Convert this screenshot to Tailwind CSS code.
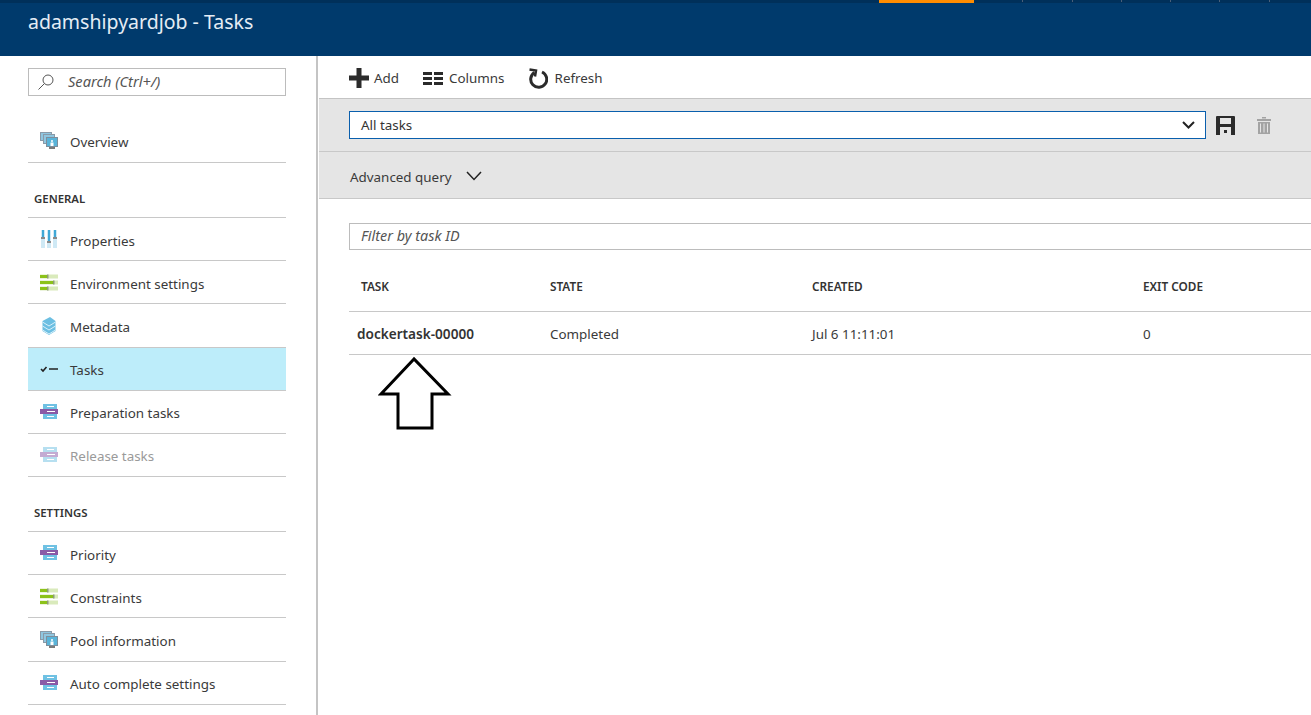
<!DOCTYPE html>
<html lang="en">
<head>
    <meta charset="UTF-8">
    <title>adamshipyardjob - Tasks</title>
    <script src="https://cdn.jsdelivr.net/npm/@tailwindcss/browser@4"></script>
</head>
<body class="relative h-[715px] w-[1311px] overflow-hidden bg-white font-['Noto_Sans','Open_Sans',sans-serif] text-[13.4px] text-[#3a3a3a]">
    <!-- Header -->
    <header class="h-[56px] bg-[#003a6c]">
        <div class="flex h-[3px] bg-[#00305a]">
            <div class="ml-[879px] h-[3px] w-[95px] bg-[#ff8c00]"></div>
            <div class="ml-[48px] h-[2px] w-px bg-[#4a5f78]"></div>
            <div class="ml-[49px] h-[2px] w-px bg-[#4a5f78]"></div>
            <div class="ml-[48px] h-[2px] w-px bg-[#4a5f78]"></div>
            <div class="ml-[48px] h-[2px] w-px bg-[#4a5f78]"></div>
            <div class="ml-[48px] h-[2px] w-px bg-[#4a5f78]"></div>
            <div class="ml-[49px] h-[2px] w-px bg-[#4a5f78]"></div>
        </div>
        <h1 class="mt-[6px] pl-[28px] text-[19.5px] leading-[26px] text-[#e4edf5]">adamshipyardjob - Tasks</h1>
    </header>

    <div class="flex h-[659px]">
        <!-- Sidebar -->
        <aside class="h-full w-[318px] shrink-0 border-r-2 border-[#c4c4c4] pl-[28px] pr-[30px] pt-[12px]">
            <div class="flex h-[28px] w-[258px] items-center border border-[#bcbcbc] pl-[8px]">
                <svg class="h-[18px] w-[18px] text-[#555]" viewBox="0 0 18 18" fill="none" stroke="currentColor" stroke-width="1"><circle cx="11" cy="7" r="5"/><path d="M7.500 10.500 1.500 16.500"/></svg>
                <span class="ml-[13px] text-[14.6px] italic text-[#555]">Search (Ctrl+/)</span>
            </div>

            <div class="mt-[24px]">
                <div class="flex h-[43px] items-center border-b border-[#c8c8c8] pl-[12px]">
                    <svg class="mr-[12px] h-[18px] w-[18px]" viewBox="0 0 18 18"><rect x="0.500" y="0.500" width="11" height="8" fill="#8fc6e0" stroke="#8a9aa8"/><rect x="3.500" y="2.500" width="11" height="9" fill="#8fc6e0" stroke="#8a9aa8"/><rect x="6.500" y="5.500" width="11" height="9" fill="#59b4d9" stroke="#7d8e9c"/><path d="M12 8a1 1 0 1 1 0 2 1 1 0 0 1 0-2ZM10.500 10.500h3V14h-3Z" fill="#fff"/><rect x="9" y="15" width="6" height="2" fill="#7a7a7a"/></svg>
                    <span class="mt-[3px]">Overview</span>
                </div>
            </div>

            <div class="h-[54px] pt-[27px] pl-[6px] text-[11.4px] font-semibold leading-[18px] text-[#333]">GENERAL</div>
            <div class="border-t border-[#c8c8c8]">
                <div class="flex h-[43px] items-center border-b border-[#c8c8c8] pl-[12px]">
                    <svg class="mr-[12px] h-[18px] w-[18px]" viewBox="0 0 18 18"><rect x="1" y="0" width="4" height="18" fill="#cfe9f5"/><rect x="7" y="0" width="4" height="18" fill="#cfe9f5"/><rect x="13" y="0" width="4" height="18" fill="#cfe9f5"/><rect x="2" y="0" width="2" height="8" fill="#3fa8d6"/><rect x="8" y="0" width="2" height="12" fill="#3fa8d6"/><rect x="14" y="0" width="2" height="8" fill="#3fa8d6"/><rect x="1" y="7" width="4" height="2" fill="#8a8a8a"/><rect x="7" y="11" width="4" height="2" fill="#8a8a8a"/><rect x="13" y="7" width="4" height="2" fill="#8a8a8a"/></svg>
                    <span class="mt-[5px]">Properties</span>
                </div>
                <div class="flex h-[43px] items-center border-b border-[#c8c8c8] pl-[12px]">
                    <svg class="mr-[12px] h-[18px] w-[18px]" viewBox="0 0 18 18"><rect y="1.500" width="18" height="4" fill="#d9eabb"/><rect y="7.500" width="18" height="4" fill="#d9eabb"/><rect y="13.500" width="18" height="4" fill="#d9eabb"/><rect y="2" width="7" height="3" fill="#8cc21a"/><rect y="8" width="13" height="3" fill="#8cc21a"/><rect y="14" width="7" height="3" fill="#8cc21a"/><rect x="7" y="1.500" width="1.500" height="4" fill="#8d9a7c"/><rect x="13" y="7.500" width="1.500" height="4" fill="#8d9a7c"/><rect x="7" y="13.500" width="1.500" height="4" fill="#8d9a7c"/></svg>
                    <span class="mt-[5px]">Environment settings</span>
                </div>
                <div class="flex h-[44px] items-center border-b border-[#c8c8c8] pl-[12px]">
                    <svg class="mr-[12px] h-[18px] w-[18px]" viewBox="0 0 18 18"><path d="M10 0 15.500 4V14L9 18 2.500 14V4Z" fill="#6cbfe2"/><path d="M2.500 5 9 9 15.500 5M2.500 9 9 13 15.500 9M2.500 13 9 17 15.500 13" fill="none" stroke="#d8f0fa" stroke-width="1"/></svg>
                    <span class="mt-[3px]">Metadata</span>
                </div>
                <div class="flex h-[43px] items-center border-b border-[#c8c8c8] bg-[#bdedfa] pl-[12px]">
                    <svg class="mr-[12px] h-[18px] w-[18px]" viewBox="0 0 18 18" fill="none" stroke="#222"><path d="M1 9 3 11 6.500 7" stroke-width="1.600"/><path d="M9 9H18" stroke-width="1.500"/></svg>
                    <span class="mt-[3px]">Tasks</span>
                </div>
                <div class="flex h-[43px] items-center border-b border-[#c8c8c8] pl-[12px]">
                    <svg class="mr-[12px] h-[18px] w-[18px]" viewBox="0 0 18 18"><rect x="3" y="1" width="14" height="5" fill="#6fc1e3"/><rect x="3" y="11" width="14" height="5" fill="#6fc1e3"/><rect x="0" y="6" width="18" height="5" fill="#8a5aa6"/><path d="M7 3.500H14M7 13.500H14M7 8.500H15" stroke="#fff" stroke-width="1"/></svg>
                    <span class="mt-[3px]">Preparation tasks</span>
                </div>
                <div class="flex h-[43px] items-center border-b border-[#c8c8c8] pl-[12px] text-[#9a9a9a]">
                    <svg class="mr-[12px] h-[18px] w-[18px] opacity-50" viewBox="0 0 18 18"><rect x="3" y="1" width="14" height="5" fill="#6fc1e3"/><rect x="3" y="11" width="14" height="5" fill="#6fc1e3"/><rect x="0" y="6" width="18" height="5" fill="#8a5aa6"/><path d="M7 3.500H14M7 13.500H14M7 8.500H15" stroke="#fff" stroke-width="1"/></svg>
                    <span class="mt-[3px]">Release tasks</span>
                </div>
            </div>

            <div class="h-[54px] pt-[27px] pl-[6px] text-[11.4px] font-semibold leading-[18px] text-[#333]">SETTINGS</div>
            <div class="border-t border-[#c8c8c8]">
                <div class="flex h-[43px] items-center border-b border-[#c8c8c8] pl-[12px]">
                    <svg class="mr-[12px] h-[18px] w-[18px]" viewBox="0 0 18 18"><rect x="3" y="1" width="14" height="5" fill="#6fc1e3"/><rect x="3" y="11" width="14" height="5" fill="#6fc1e3"/><rect x="0" y="6" width="18" height="5" fill="#8a5aa6"/><path d="M7 3.500H14M7 13.500H14M7 8.500H15" stroke="#fff" stroke-width="1"/></svg>
                    <span class="mt-[5px]">Priority</span>
                </div>
                <div class="flex h-[43px] items-center border-b border-[#c8c8c8] pl-[12px]">
                    <svg class="mr-[12px] h-[18px] w-[18px]" viewBox="0 0 18 18"><rect y="1.500" width="18" height="4" fill="#d9eabb"/><rect y="7.500" width="18" height="4" fill="#d9eabb"/><rect y="13.500" width="18" height="4" fill="#d9eabb"/><rect y="2" width="7" height="3" fill="#8cc21a"/><rect y="8" width="13" height="3" fill="#8cc21a"/><rect y="14" width="7" height="3" fill="#8cc21a"/><rect x="7" y="1.500" width="1.500" height="4" fill="#8d9a7c"/><rect x="13" y="7.500" width="1.500" height="4" fill="#8d9a7c"/><rect x="7" y="13.500" width="1.500" height="4" fill="#8d9a7c"/></svg>
                    <span class="mt-[5px]">Constraints</span>
                </div>
                <div class="flex h-[44px] items-center border-b border-[#c8c8c8] pl-[12px]">
                    <svg class="mr-[12px] h-[18px] w-[18px]" viewBox="0 0 18 18"><rect x="0.500" y="0.500" width="11" height="8" fill="#8fc6e0" stroke="#8a9aa8"/><rect x="3.500" y="2.500" width="11" height="9" fill="#8fc6e0" stroke="#8a9aa8"/><rect x="6.500" y="5.500" width="11" height="9" fill="#59b4d9" stroke="#7d8e9c"/><path d="M12 8a1 1 0 1 1 0 2 1 1 0 0 1 0-2ZM10.500 10.500h3V14h-3Z" fill="#fff"/><rect x="9" y="15" width="6" height="2" fill="#7a7a7a"/></svg>
                    <span class="mt-[3px]">Pool information</span>
                </div>
                <div class="flex h-[43px] items-center border-b border-[#c8c8c8] pl-[12px]">
                    <svg class="mr-[12px] h-[18px] w-[18px]" viewBox="0 0 18 18"><rect x="3" y="1" width="14" height="5" fill="#6fc1e3"/><rect x="3" y="11" width="14" height="5" fill="#6fc1e3"/><rect x="0" y="6" width="18" height="5" fill="#8a5aa6"/><path d="M7 3.500H14M7 13.500H14M7 8.500H15" stroke="#fff" stroke-width="1"/></svg>
                    <span class="mt-[3px]">Auto complete settings</span>
                </div>
            </div>
        </aside>

        <!-- Main -->
        <main class="min-w-0 flex-1 pl-px">
            <div class="flex h-[43px] items-center border-b border-[#c4c4c4] pl-[30px] pt-[2px]">
                <svg class="h-[20px] w-[20px]" viewBox="0 0 20 20" fill="#2b2b2b"><path d="M7.500 0h5v7.500H20v5h-7.500V20h-5v-7.500H0v-5h7.500Z"/></svg>
                <span class="ml-[5px]">Add</span>
                <svg class="ml-[24px] h-[13px] w-[20px]" viewBox="0 0 20 13" fill="#2b2b2b"><path d="M0 0h9v3H0ZM11 0h9v3h-9ZM0 5h9v3H0ZM11 5h9v3h-9ZM0 10h9v3H0ZM11 10h9v3h-9Z"/></svg>
                <span class="ml-[6px]">Columns</span>
                <svg class="ml-[23px] h-[21px] w-[20px]" viewBox="0 0 20 21" fill="none" stroke="#2b2b2b" stroke-width="3"><path d="M6.500 4.500A8 8 0 1 0 14 4"/><path d="M1.500 1.500 8 2.500 7 8.500" stroke-width="2.500"/></svg>
                <span class="ml-[7px]">Refresh</span>
            </div>

            <div class="flex h-[53px] items-center border-b border-[#c8c8c8] bg-[#e5e5e5] pl-[30px]">
                <div class="flex h-[28px] w-[857px] items-center justify-between border border-[#0a5fad] bg-white pl-[11px] pr-[10px]">
                    <span class="text-[#333]">All tasks</span>
                    <svg class="h-[8px] w-[13px]" viewBox="0 0 13 8" fill="none" stroke="#222" stroke-width="2"><path d="M1 1 6.500 6.500 12 1"/></svg>
                </div>
                <svg class="ml-[10px] h-[19px] w-[19px]" viewBox="0 0 19 19" fill="#2b2b2b"><path d="M1 0H18a1 1 0 0 1 1 1V19H0V1a1 1 0 0 1 1-1ZM4 2V8H15V2ZM4 11V19H15V11Z" fill-rule="evenodd"/><rect x="8" y="14" width="3" height="3"/></svg>
                <svg class="ml-[22px] h-[17px] w-[14px]" viewBox="0 0 14 17" fill="#a3a3a3"><path d="M5 0h4v1.500H5ZM0 2h14v2H0ZM1 5h12v12H1Z"/><path d="M3.500 6.500V15.500M7 6.500V15.500M10.500 6.500V15.500" stroke="#e5e5e5"/></svg>
            </div>

            <div class="flex h-[47px] items-center border-b border-[#c8c8c8] bg-[#e5e5e5] pl-[31px] pt-[2px]">
                <span class="mt-[2px]">Advanced query</span>
                <svg class="ml-[14px] h-[10px] w-[16px]" viewBox="0 0 16 10" fill="none" stroke="#222" stroke-width="1.500"><path d="M1 1 8 8.500 15 1"/></svg>
            </div>

            <div class="ml-[30px] mt-[24px] flex h-[27px] items-center border border-r-0 border-[#bcbcbc] pb-[2px] pl-[11px] text-[14.4px] italic text-[#555]">Filter by task ID</div>

            <div class="ml-[30px] mt-[17px] flex h-[45px] items-center border-b border-[#c8c8c8] pb-[4px] text-[11.8px] font-semibold text-[#333]">
                <div class="w-[201px] pl-[12px]">TASK</div>
                <div class="w-[262px]">STATE</div>
                <div class="w-[331px]">CREATED</div>
                <div>EXIT CODE</div>
            </div>
            <div class="ml-[30px] flex h-[43px] items-center border-b border-[#c8c8c8] pt-[3px]">
                <div class="w-[201px] pl-[8px] text-[13.6px] font-semibold text-[#333]">dockertask-00000</div>
                <div class="w-[262px]">Completed</div>
                <div class="w-[331px]">Jul 6 11:11:01</div>
                <div>0</div>
            </div>
        </main>
    </div>

    <!-- Annotation arrow -->
    <svg class="absolute left-[378px] top-[356px] h-[76px] w-[74px]" viewBox="0 0 74 76" fill="none" stroke="#000" stroke-width="3"><path d="M36 3 3 38H20V72H54V38H70Z"/></svg>
</body>
</html>
